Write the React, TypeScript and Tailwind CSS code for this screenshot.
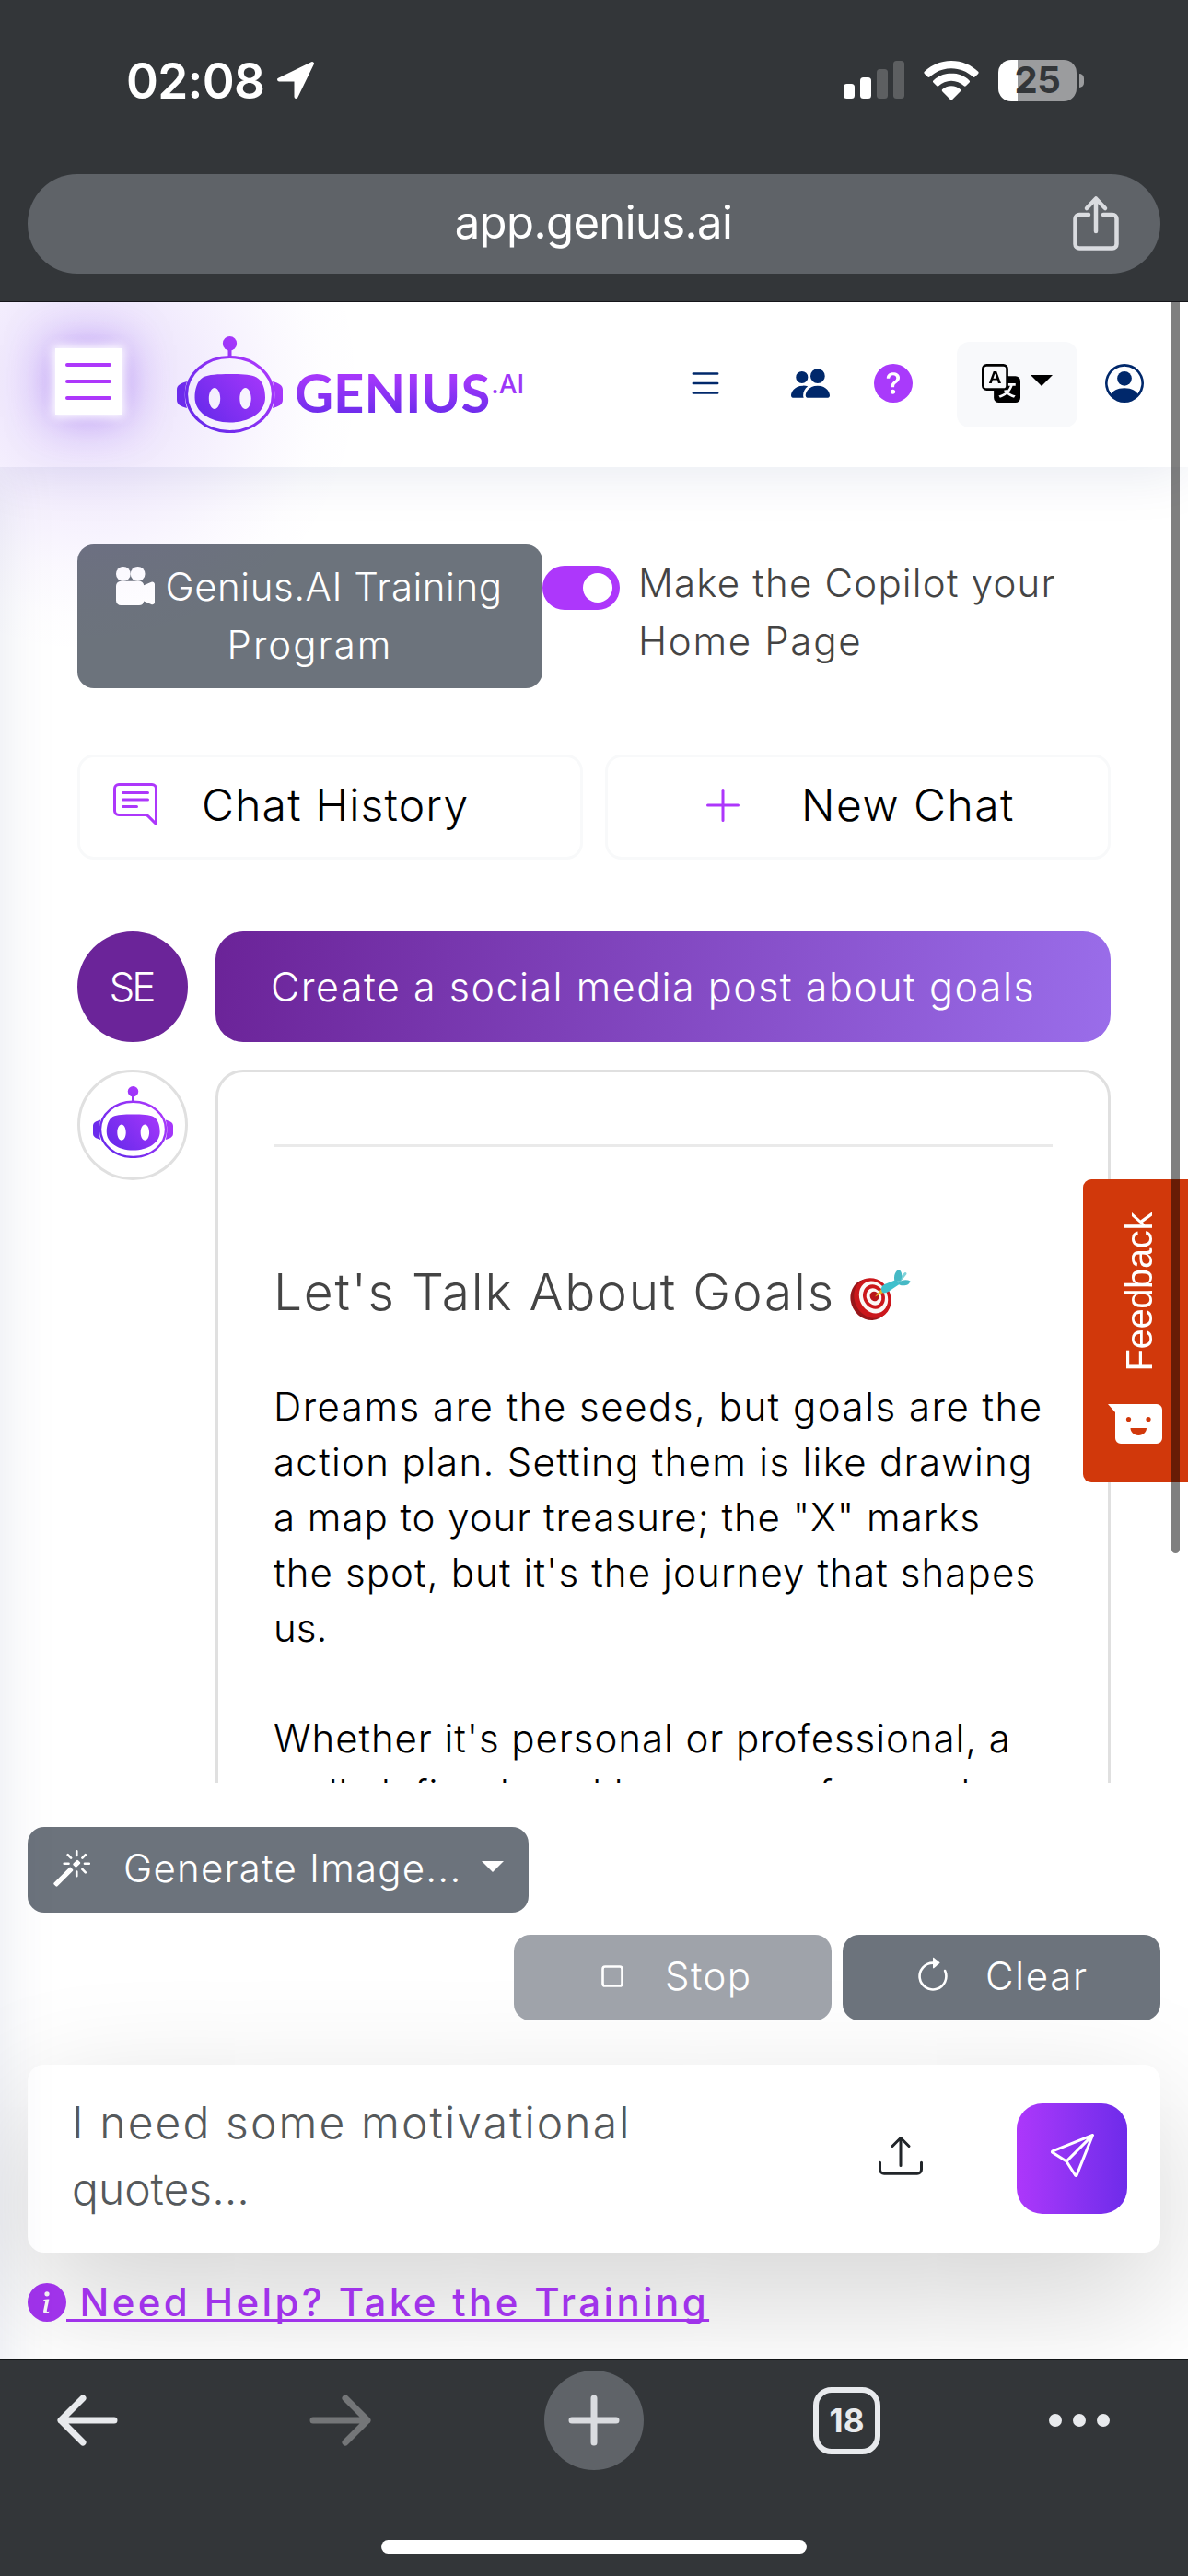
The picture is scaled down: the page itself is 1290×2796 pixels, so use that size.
import {
  BsArrowClockwise,
  BsCameraReelsFill,
  BsChatRightText,
  BsInfoCircleFill,
  BsList,
  BsMagic,
  BsPeopleFill,
  BsPersonCircle,
  BsPlusLg,
  BsQuestionCircleFill,
  BsSend,
  BsStop,
  BsTranslate,
  BsUpload,
} from "react-icons/bs";

function StatusBar() {
  return (
    <div className="flex h-[174px] items-center justify-between pl-[137px] pr-[113px]">
      <div className="flex items-center gap-[12px] pt-[2px]">
        <span className="text-[53px] font-semibold leading-none tracking-[-0.7px]">02:08</span>
        <svg width="44" height="44" viewBox="0 0 44 44" fill="#fff" stroke="#fff">
          <path d="M40 3 L4 20.5 H22.5 V39 Z" strokeWidth="4" strokeLinejoin="round" />
        </svg>
      </div>
      <div className="flex items-center">
        <svg width="66" height="42" viewBox="0 0 66 42">
          <rect x="0" y="25" width="12" height="16" rx="3.5" fill="#fff" />
          <rect x="18" y="18" width="12" height="23" rx="3.5" fill="#fff" />
          <rect x="36" y="9" width="12" height="32" rx="3.5" fill="#5d5f61" />
          <rect x="54" y="0" width="12" height="41" rx="3.5" fill="#5d5f61" />
        </svg>
        <svg className="ml-[21px]" width="60" height="44" viewBox="0 0 60 44" fill="#fff">
          <path d="M30 1C18.600 1 8.200 5.500.8 12.800c-.6.600-.6 1.500 0 2.100l3.600 3.700c.6.600 1.500.6 2.100 0C12.600 12.700 20.900 9.200 30 9.200s17.400 3.500 23.500 9.400c.6.600 1.500.6 2.100 0l3.600-3.700c.6-.6.600-1.500 0-2.100C51.800 5.500 41.400 1 30 1z" />
          <path d="M30 14.600c-7.600 0-14.500 3-19.600 7.800-.6.600-.6 1.500 0 2.100l3.800 3.800c.6.500 1.400.5 2 0 3.600-3.400 8.500-5.500 13.800-5.500s10.200 2.100 13.800 5.500c.6.500 1.400.5 2 0l3.800-3.800c.6-.6.600-1.500 0-2.100-5.100-4.800-12-7.800-19.600-7.800z" />
          <path d="M30 28.300c-3.800 0-7.200 1.400-9.800 3.800-.6.600-.6 1.500 0 2.100l8.700 8.700c.6.600 1.600.6 2.200 0l8.700-8.700c.6-.6.600-1.500 0-2.100-2.600-2.400-6-3.800-9.800-3.800z" />
        </svg>
        <div className="ml-[21px] flex h-[45px] w-[85px] items-center justify-center rounded-[14px] bg-[linear-gradient(90deg,#fff_0_21px,#9b9c9e_21px)]">
          <span className="text-[40px] font-bold leading-none tracking-[-0.5px] text-[#333639]">25</span>
        </div>
        <div className="ml-[3px] h-[15px] w-[5px] rounded-r-full bg-[#9b9c9e]" />
      </div>
    </div>
  );
}

function AddressBar() {
  return (
    <div className="mx-[30px] mt-[15px] flex h-[108px] items-center justify-between rounded-full bg-[#5f6368] pl-[95px] pr-[44px]">
      <span className="flex-1 pb-[3px] text-center text-[49px] leading-none tracking-[-0.6px]">app.genius.ai</span>
      <svg width="52" height="62" viewBox="0 0 52 62" fill="none" stroke="#dadce0" strokeWidth="4.500" strokeLinecap="round" strokeLinejoin="round">
        <path d="M18 21H8a4.500 4.500 0 0 0-4.500 4.500V53A4.500 4.500 0 0 0 8 57.500h36a4.500 4.500 0 0 0 4.500-4.500V25.500A4.500 4.500 0 0 0 44 21H34" />
        <path d="M26 39V4M16 14 26 3.500 36 14" />
      </svg>
    </div>
  );
}

function Robot({className, id}: {className?: string; id: string}) {
  const fill = `url(#${id})`;
  return (
    <svg className={className} viewBox="0 0 115 105" preserveAspectRatio="none">
      <defs>
        <linearGradient id={id} x1="15" y1="95" x2="100" y2="20" gradientUnits="userSpaceOnUse">
          <stop offset="0.150" stopColor="#6c2bec" />
          <stop offset="0.850" stopColor="#a637fb" />
        </linearGradient>
      </defs>
      <ellipse cx="57.500" cy="7.700" rx="7.600" ry="7.700" fill={fill} />
      <path d="M55.500 14h4v10h-4z" fill={fill} />
      <ellipse cx="57.500" cy="63" rx="47" ry="40.500" fill="none" stroke={fill} strokeWidth="3.200" />
      <path d="M11 49C4 51 0 53 0 58v11c0 5 4 7 11 9-3-9-3-20 0-29z" fill={fill} />
      <path d="M104 49c7 2 11 4 11 9v11c0 5-4 7-11 9 3-9 3-20 0-29z" fill={fill} />
      <path
        fillRule="evenodd"
        d="M57.500 41c13 0 23 .5 29 3.500 7 4 9.500 13 9.500 22 0 16-17 27-38.500 27S19.500 82 19.500 66.500c0-9 2.500-18 9-22C34.500 41.500 44.500 41 57.500 41zM41 56c-3.400 0-6.200 5.200-6.200 11.500S37.600 79 41 79s6.200-5.200 6.200-11.500S44.400 56 41 56zm33.500 0c-3.400 0-6.200 5.200-6.200 11.500S71.100 79 74.500 79s6.200-5.200 6.200-11.500S77.900 56 74.500 56z"
        fill={fill}
      />
    </svg>
  );
}

function Caret({className}: {className?: string}) {
  return (
    <svg className={className} width="24" height="12" viewBox="0 0 24 12" fill="currentColor">
      <path d="M0 0h24L12 12z" />
    </svg>
  );
}

function Header() {
  return (
    <header className="relative z-10 flex h-[179px] items-center bg-white pl-[60px] pr-[48px] text-[42px] text-[#00286b] shadow-[0_6px_60px_rgba(1,41,112,0.1)]">
      {/* wide glow around the menu button */}
      <div className="pointer-events-none absolute -left-[204px] -top-[214px] h-[600px] w-[600px] bg-[radial-gradient(closest-side,rgba(113,43,235,0.15),rgba(113,43,235,0.12)_25%,rgba(113,43,235,0.075)_45%,rgba(113,43,235,0.03)_68%,rgba(113,43,235,0.008)_85%,transparent)]" />
      <button className="relative -mt-[7px] flex h-[72px] w-[72px] flex-col items-center justify-center gap-[14px] bg-white shadow-[0_0_10px_3px_#fff,0_0_48px_3px_rgba(113,43,235,0.5)]">
        <span className="h-[4px] w-[50px] rounded-full bg-[#ad37fb]" />
        <span className="h-[4px] w-[50px] rounded-full bg-[#ad37fb]" />
        <span className="h-[4px] w-[50px] rounded-full bg-[#ad37fb]" />
      </button>
      <div className="relative ml-[60px] flex items-center">
        <Robot id="logo" className="h-[105px] w-[115px]" />
        <span className="ml-[13px] mt-[17px] bg-gradient-to-b from-[#a637fb] from-25% to-[#6c2bec] to-85% bg-clip-text font-['Lato'] text-[58px] font-bold leading-[70px] text-transparent">
          GENIUS
        </span>
        <span className="mb-[1px] ml-[1px] text-[28px] font-medium leading-none text-[#9d36f8]">.AI</span>
      </div>
      <div className="relative ml-auto flex items-center">
        <BsList className="-mt-[3px]" />
        <BsPeopleFill className="-mt-[3px] ml-[72px]" />
        <BsQuestionCircleFill className="-mt-[3px] ml-[48px] text-[#a93afb]" />
        <button className="ml-[48px] flex h-[93px] w-[131px] items-center rounded-[14px] bg-[#f8f9fb] pl-[27px] text-black">
          <BsTranslate className="-mt-[3px]" />
          <Caret className="-mt-[9px] ml-[11px]" />
        </button>
        <BsPersonCircle className="-mt-[3px] ml-[30px]" />
      </div>
    </header>
  );
}

function DartIcon() {
  return (
    <svg width="68" height="60" viewBox="0 0 68 60">
      <ellipse cx="22.500" cy="35.500" rx="20.500" ry="23" fill="#98161a" transform="rotate(-28 22.500 35.500)" />
      <ellipse cx="25.500" cy="34" rx="19.500" ry="22.500" fill="#cb171c" transform="rotate(-28 25.500 34)" />
      <ellipse cx="26.500" cy="33" rx="15" ry="18" fill="#fbf8f7" transform="rotate(-28 26.500 33)" />
      <ellipse cx="27" cy="32.500" rx="11.500" ry="13.500" fill="#cb171c" transform="rotate(-28 27 32.500)" />
      <ellipse cx="27" cy="32.500" rx="8" ry="9.500" fill="#fbf8f7" transform="rotate(-28 27 32.500)" />
      <ellipse cx="27.500" cy="32" rx="4.800" ry="5.500" fill="#b81418" transform="rotate(-28 27.500 32)" />
      <path d="M28 32.500 34 25l2.500-2 3 4.500-3.500 1z" fill="#e6b422" />
      <path d="M36 27.500c-2-3-1-7 2.500-8.500L51 14l5 4-13.500 9c-2.500 1.500-5 2-6.500.5z" fill="#3fc0cc" />
      <path d="M54 16 61 7.500" stroke="#7fd3da" strokeWidth="3" strokeLinecap="round" />
      <path d="M49.500 15.500C48 10 50 4.500 54 3c3.500 1.500 4.500 8 1.500 12.500z" fill="#46b9c5" />
      <path d="M53.500 17c4-3 9-3.500 13-1.500-1 4.500-7 6-12 4z" fill="#46b9c5" />
    </svg>
  );
}

function Conversation() {
  return (
    <section className="mt-[78px] h-[924px] overflow-hidden">
      <div className="flex gap-[30px]">
        <div className="flex h-[120px] w-[120px] items-center justify-center rounded-full bg-[#6b2499] pr-[3px] text-[44px] font-light tracking-[-3px] text-white">
          SE
        </div>
        <div className="flex h-[120px] w-[972px] items-center whitespace-nowrap rounded-[30px] bg-[linear-gradient(98deg,#6b2398,#9a6dea)] pl-[60px] text-[43px] font-light tracking-[1.5px] text-white">
          Create a social media post about goals
        </div>
      </div>
      <div className="mt-[30px] flex items-start gap-[30px]">
        <div className="flex h-[120px] w-[120px] items-center justify-center rounded-full border-[3px] border-[#e0e0e0]">
          <Robot id="avatar" className="-mt-[7px] h-[78px] w-[87px]" />
        </div>
        <div className="h-[900px] w-[972px] whitespace-nowrap rounded-[30px] border-[3px] border-[#e0e0e0] px-[60px] pt-[78px]">
          <div className="h-[3px] bg-[#eaeaea]" />
          <h2 className="mt-[123px] flex h-[68px] items-center text-[55px] font-light tracking-[1.8px] text-[#444]">
            Let's Talk About Goals
            <span className="ml-[15px] mt-[6px]">
              <DartIcon />
            </span>
          </h2>
          <p className="mt-[61px] text-[42px] font-light leading-[60px] text-black">
            <span className="block tracking-[1.5px]">Dreams are the seeds, but goals are the</span>
            <span className="block tracking-[1.3px]">action plan. Setting them is like drawing</span>
            <span className="block tracking-[0.95px]">a map to your treasure; the "X" marks</span>
            <span className="block tracking-[1.12px]">the spot, but it's the journey that shapes</span>
            <span className="block">us.</span>
          </p>
          <p className="mt-[60px] text-[42px] font-light leading-[60px] text-black">
            <span className="block tracking-[0.93px]">Whether it's personal or professional, a</span>
            <span className="block tracking-[1px]">well-defined goal keeps you focused</span>
          </p>
        </div>
      </div>
    </section>
  );
}

function Composer() {
  return (
    <section className="px-[30px]">
      <button className="mt-[48px] flex h-[93px] w-[544px] items-center rounded-[18px] bg-[#6c737c] pb-[4px] pl-[27px] text-[42px] font-light text-white">
        <BsMagic />
        <span className="ml-[35px] w-[389px] text-left tracking-[1.2px]">Generate Image...</span>
        <Caret className="-mt-[4px]" />
      </button>
      <div className="mt-[24px] flex justify-end gap-[12px] text-[42px] font-light text-white">
        <button className="flex h-[93px] w-[345px] items-center gap-[36px] rounded-[18px] bg-[#9fa3aa] pb-[4px] pl-[86px]">
          <BsStop />
          <span className="tracking-[1.4px]">Stop</span>
        </button>
        <button className="flex h-[93px] w-[345px] items-center gap-[36px] rounded-[18px] bg-[#6c737c] pb-[4px] pl-[77px]">
          <BsArrowClockwise />
          <span className="tracking-[1.7px]">Clear</span>
        </button>
      </div>
      <div className="mt-[48px] flex h-[204px] items-start rounded-[18px] bg-white pl-[48px] pr-[36px] shadow-[0_48px_144px_rgba(0,0,0,0.175)]">
        <p className="mt-[27px] flex-1 text-[48px] font-light leading-[72px] text-[#55595c]">
          <span className="block tracking-[2.1px]">I need some motivational</span>
          <span className="block">quotes...</span>
        </p>
        <BsUpload className="mt-[75px] text-[48px] text-[#212529]" />
        <button className="ml-[102px] mt-[42px] flex h-[120px] w-[120px] items-center justify-center rounded-[28px] bg-gradient-to-r from-[#ad37fb] to-[#6e2bea] pb-[6px] text-[48px] text-white">
          <BsSend />
        </button>
      </div>
      <a className="relative mt-[33px] flex h-[42px] items-center text-[42px] font-medium text-[#a033ea]">
        <BsInfoCircleFill />
        <span className="whitespace-pre pb-[2px] tracking-[3.38px] underline decoration-[3px] underline-offset-[3px] [text-decoration-skip-ink:none]">
          {" Need Help? Take the Training"}
        </span>
      </a>
    </section>
  );
}

function Feedback() {
  return (
    <div className="absolute right-0 top-[952px] z-20 flex h-[329px] w-[114px] flex-col items-center rounded-l-[9px] bg-[#d1380b] pl-[8px] pt-[36px] text-white">
      <span className="rotate-180 font-['Liberation_Sans'] text-[40px] leading-[48px] tracking-[-0.4px] [writing-mode:vertical-rl]">
        Feedback
      </span>
      <svg className="-ml-[8px] mt-[36px]" width="60" height="44" viewBox="0 0 60 44">
        <path d="M0 0h53a6 6 0 0 1 6 6v31a6 6 0 0 1-6 6H14a6 6 0 0 1-6-6V9z" fill="#fff" />
        <circle cx="22.500" cy="16.500" r="2.600" fill="#d1380b" />
        <circle cx="44" cy="16.500" r="2.600" fill="#d1380b" />
        <path d="M24.500 26h17.500c0 4-3.500 8-8.750 8s-8.750-4-8.750-8z" fill="#d1380b" />
      </svg>
    </div>
  );
}

function BottomBar() {
  return (
    <div className="h-[235px] border-t border-[#111416] bg-[#333639] pt-[11px]">
      <div className="flex h-[108px] items-center">
        <svg className="ml-[61px]" width="69" height="60" viewBox="0 0 69 60" fill="none" stroke="#e8eaed" strokeWidth="7" strokeLinecap="round" strokeLinejoin="round">
          <path d="M63 30H5M29 6 5 30l24 24" />
        </svg>
        <svg className="ml-[206px]" width="69" height="60" viewBox="0 0 69 60" fill="none" stroke="#747678" strokeWidth="7" strokeLinecap="round" strokeLinejoin="round">
          <path d="M4 30h59M39 6l24 24-24 24" />
        </svg>
        <div className="ml-[186px] flex h-[108px] w-[108px] items-center justify-center rounded-full bg-[#5f6368]">
          <svg width="56" height="56" viewBox="0 0 56 56" stroke="#dadce0" strokeWidth="7" strokeLinecap="round">
            <path d="M28 4v48M4 28h48" />
          </svg>
        </div>
        <div className="ml-[184px] flex h-[73px] w-[73px] items-center justify-center rounded-[20px] border-[6px] border-[#e8eaed] text-[35px] font-bold leading-none text-[#e8eaed]">
          18
        </div>
        <div className="ml-[183px] flex gap-[12px]">
          <span className="h-[14px] w-[14px] rounded-full bg-[#e8eaed]" />
          <span className="h-[14px] w-[14px] rounded-full bg-[#e8eaed]" />
          <span className="h-[14px] w-[14px] rounded-full bg-[#e8eaed]" />
        </div>
      </div>
      <div className="mx-auto mt-[76px] h-[15px] w-[462px] rounded-full bg-white" />
    </div>
  );
}

export default function App() {
  return (
    <div className="h-[2796px] w-[1290px] overflow-hidden bg-white font-['Inter',sans-serif]">
      <div className="h-[328px] border-b border-[#15151a] bg-[#333639] text-white">
        <StatusBar />
        <AddressBar />
      </div>

      <div className="relative h-[2233px] overflow-hidden bg-white">
        {/* shadow of the closed sidebar */}
        <div className="absolute -left-[300px] top-[179px] z-10 h-[2300px] w-[300px] shadow-[0_0_60px_rgba(1,41,112,0.1)]" />
        <Header />
        <main className="px-[84px] pt-[84px]">
          <div className="flex h-[156px] items-start text-[42px] font-light leading-[63px]">
            <button className="h-full w-[505px] whitespace-nowrap rounded-[18px] bg-[#6c737c] pb-[3px] text-white">
              <span className="-ml-[1px] flex items-center justify-center gap-[11px] tracking-[0.55px]">
                <BsCameraReelsFill />
                Genius.AI Training
              </span>
              <span className="block tracking-[2px]">Program</span>
            </button>
            <div className="mt-[23px] flex h-[48px] w-[84px] items-center justify-end rounded-full bg-[#ad37fb] pr-[8px]">
              <span className="h-[32px] w-[32px] rounded-full bg-white" />
            </div>
            <p className="ml-[20px] mt-[10px] whitespace-nowrap text-[#444]">
              <span className="block tracking-[1.2px]">Make the Copilot your</span>
              <span className="block tracking-[1.7px]">Home Page</span>
            </p>
          </div>

          <div className="mt-[72px] grid grid-cols-2 gap-[24px] text-[48px] font-light text-black">
            <button className="flex h-[114px] items-center rounded-[18px] border-[3px] border-[#f8f9fa] pb-[5px] pl-[36px]">
              <BsChatRightText className="text-[#ad37fb]" />
              <span className="ml-[48px] tracking-[1.2px]">Chat History</span>
            </button>
            <button className="flex h-[114px] items-center rounded-[18px] border-[3px] border-[#f8f9fa] pb-[5px] pl-[101px]">
              <BsPlusLg className="text-[#ad37fb]" />
              <span className="ml-[61px] tracking-[1.5px]">New Chat</span>
            </button>
          </div>

          <Conversation />
        </main>
        <Composer />
        <Feedback />
        <div className="absolute left-[1272px] top-0 z-30 h-[1358px] w-[9px] rounded-b-full bg-black/50" />
      </div>

      <BottomBar />
    </div>
  );
}
